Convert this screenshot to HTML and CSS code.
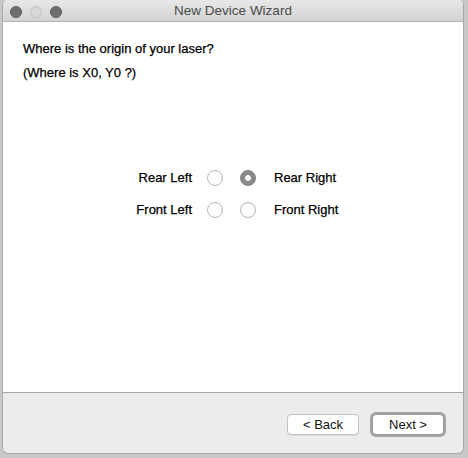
FILE: index.html
```html
<!DOCTYPE html>
<html>
<head>
<meta charset="utf-8">
<link rel="stylesheet" href="styles.css">
</head>
<body>
<div class="window">
  <div class="titlebar">
    <div class="lights">
      <span class="light dark"></span>
      <span class="light light-off"></span>
      <span class="light dark"></span>
    </div>
    <div class="title">New Device Wizard</div>
  </div>
  <div class="content">
    <p class="q">Where is the origin of your laser?</p>
    <p class="q">(Where is X0, Y0 ?)</p>
    <div class="grid">
      <span class="lbl-l">Rear Left</span>
      <span class="cell"><span class="radio"></span></span>
      <span class="cell"><span class="radio checked"></span></span>
      <span class="lbl-r">Rear Right</span>
      <span class="lbl-l">Front Left</span>
      <span class="cell"><span class="radio"></span></span>
      <span class="cell"><span class="radio"></span></span>
      <span class="lbl-r">Front Right</span>
    </div>
  </div>
  <div class="footer">
    <button class="btn">&lt; Back</button>
    <button class="btn default">Next &gt;</button>
  </div>
</div>
</body>
</html>
```
FILE: styles.css
```css
html, body {
  margin: 0;
  padding: 0;
}
body {
  width: 468px;
  height: 458px;
  background: #c9c9c9;
  font-family: "Liberation Sans", Arial, sans-serif;
  font-size: 13px;
  color: #111;
  overflow: hidden;
}
.window {
  margin-left: 2px;
  width: 460px;
  height: 453px;
  border: 1px solid #a9a9a9;
  border-top: none;
  border-radius: 5px 5px 6px 6px;
  overflow: hidden;
  display: flex;
  flex-direction: column;
  background: #ececec;
}
.titlebar {
  height: 22px;
  box-sizing: border-box;
  background: linear-gradient(#e8e8e8, #d3d3d3);
  border-bottom: 1px solid #b3b3b3;
  display: flex;
  align-items: center;
  position: relative;
}
.lights {
  display: flex;
  gap: 8px;
  padding-left: 7px;
  padding-top: 2px;
}
.light {
  width: 12px;
  height: 12px;
  border-radius: 50%;
  box-sizing: border-box;
}
.light.dark {
  background: #6e6e6e;
  border: 1px solid #5c5c5c;
}
.light.light-off {
  background: #d9d9d9;
  border: 1px solid #bdbdbd;
}
.title {
  position: absolute;
  left: 0;
  right: 0;
  top: 3px;
  text-align: center;
  color: #4a4a4a;
  font-size: 13.5px;
}
.content {
  flex: 1;
  background: #fff;
  padding: 19px 0 0 20px;
  border-bottom: 1px solid #a6a6a6;
}
.q {
  margin: 0 0 8px 0;
  line-height: 16px;
  color: #000;
  -webkit-text-stroke: 0.25px #000;
}
.grid {
  display: grid;
  grid-template-columns: 75px 33px 34px auto;
  grid-auto-rows: 16px;
  row-gap: 16px;
  align-items: center;
  margin: 89px 0 0 109px;
  width: max-content;
}
.lbl-l, .lbl-r {
  white-space: nowrap;
  line-height: 16px;
  color: #000;
  -webkit-text-stroke: 0.25px #000;
}
.lbl-l {
  text-align: right;
  padding-right: 15px;
}
.cell {
  display: flex;
  height: 16px;
}
.radio {
  width: 16px;
  height: 16px;
  box-sizing: border-box;
  border-radius: 50%;
  border: 1px solid #b4b4b4;
  background: #fff;
}
.radio.checked {
  background: radial-gradient(circle, #fff 0 2.6px, #8a8a8a 3.2px);
  border-color: #808080;
}
.footer {
  height: 60px;
  display: flex;
  align-items: center;
  justify-content: flex-end;
  gap: 13px;
  padding-right: 19px;
  padding-top: 2px;
  box-sizing: border-box;
}
.btn {
  width: 72px;
  height: 21px;
  box-sizing: border-box;
  border: 1px solid #c2c2c2;
  border-radius: 4px;
  background: #fff;
  font-family: "Liberation Sans", Arial, sans-serif;
  font-size: 13px;
  color: #111;
  padding: 0;
  box-shadow: 0 1px 0 rgba(0,0,0,0.06);
}
.btn.default {
  box-shadow: 0 0 0 2px #a3a3a3;
  border-color: #9a9a9a;
}
```
